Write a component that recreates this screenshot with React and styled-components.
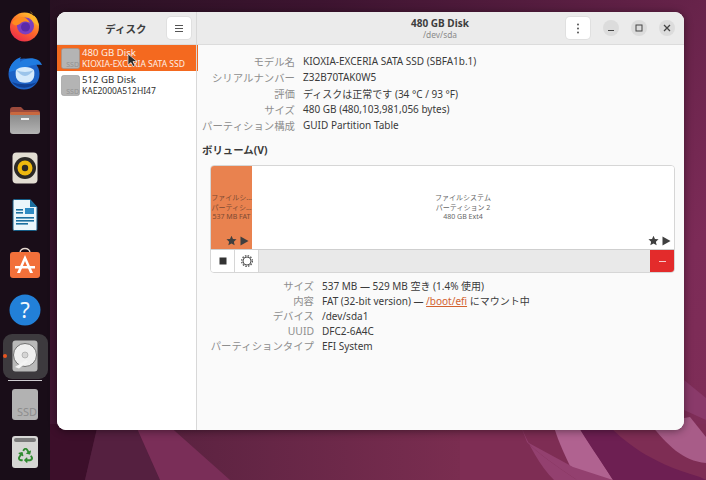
import React from 'react'
import styled, { createGlobalStyle } from 'styled-components'
import { FaRecycle } from 'react-icons/fa'

const GlobalStyle = createGlobalStyle`
  html, body { margin: 0; padding: 0; width: 706px; height: 480px; overflow: hidden; }
  body { font-family: "Noto Sans", "Noto Sans CJK JP", sans-serif; }
`

const Desktop = styled.div`
  position: relative;
  width: 706px;
  height: 480px;
  display: flex;
  overflow: hidden;
  background: linear-gradient(128deg, #24101f 0%, #3d1430 30%, #5f2045 58%, #7c2b57 82%, #7f2e57 100%);
`

const Wallpaper = styled.svg`
  position: absolute;
  inset: 0;
`

const Dock = styled.nav`
  position: relative;
  width: 50px;
  height: 480px;
  box-sizing: border-box;
  padding-top: 2px;
  background: #190d18;
  display: flex;
  flex-direction: column;
  align-items: center;
  flex-shrink: 0;
`

const DockSlot = styled.div`
  position: relative;
  width: 45px;
  height: ${p => p.$h || 47.4}px;
  display: flex;
  align-items: center;
  justify-content: center;
  flex-shrink: 0;
  border-radius: 9px;
  background: ${p => (p.$active ? '#3d3a3e' : 'transparent')};
`

const RunDot = styled.span`
  position: absolute;
  left: 0;
  top: 50%;
  width: 4px;
  height: 4px;
  margin-top: -2px;
  border-radius: 50%;
  background: #e95420;
`

const DockRule = styled.div`
  width: 34px;
  height: 1px;
  margin-top: 1px;
  background: #cfcdd0;
  flex-shrink: 0;
`

const SsdTile = styled.div`
  width: 26px;
  height: 31px;
  box-sizing: border-box;
  padding: 0 1px 3px 0;
  border-radius: 3px;
  background: #b2b2b2;
  display: flex;
  align-items: flex-end;
  justify-content: flex-end;
  color: #8d8d8d;
  font-size: 11px;
  line-height: 11px;
`

const TrashTile = styled.div`
  width: 26px;
  height: 32px;
  box-sizing: border-box;
  padding-top: 2px;
  border-radius: 3px;
  background: #d6d6d4;
  display: flex;
  flex-direction: column;
  align-items: center;
  gap: 6px;
  color: #2f8a2f;
`

const TrashLid = styled.div`
  width: 22px;
  height: 4px;
  border-radius: 2px;
  background: #7b7b7b;
`

const Stage = styled.div`
  position: relative;
  flex: 1;
  padding: 12px 22px 50px 7px;
`

const Win = styled.div`
  height: 418px;
  display: flex;
  border-radius: 9px;
  overflow: hidden;
  background: #fafafa;
  box-shadow: 0 1px 8px rgba(0, 0, 0, 0.45);
`

const SidePane = styled.aside`
  width: 139px;
  flex-shrink: 0;
  border-right: 1px solid #d8d8d8;
  background: #fff;
  display: flex;
  flex-direction: column;
`

const MainPane = styled.main`
  flex: 1;
  min-width: 0;
  display: flex;
  flex-direction: column;
`

const Header = styled.header`
  height: 32px;
  flex-shrink: 0;
  display: flex;
  align-items: center;
  background: #ebebeb;
  border-bottom: 1px solid #dcdcdc;
`

const SideTitle = styled.div`
  flex: 1;
  padding-left: 28px;
  text-align: center;
  font-size: 10.5px;
  font-weight: 700;
  color: #3d3d3d;
`

const HeadButton = styled.button`
  width: 24px;
  height: 22px;
  padding: 0;
  margin-right: ${p => p.$mr || 0}px;
  border: none;
  border-radius: 4px;
  background: #fff;
  box-shadow: 0 0 0 1px #e0e0e0;
  display: flex;
  align-items: center;
  justify-content: center;
  flex-shrink: 0;
`

const TitleBlock = styled.div`
  flex: 1;
  padding: 1px 0 0 117px;
  text-align: center;
  line-height: 11px;
`

const TitleMain = styled.div`
  font-size: 10px;
  font-weight: 700;
  color: #3d3d3d;
`

const TitleSub = styled.div`
  font-size: 8.4px;
  color: #8a8a8a;
`

const WinControls = styled.div`
  display: flex;
  gap: 12px;
  margin: 0 9px 0 13px;
`

const WinControl = styled.span`
  width: 16px;
  height: 16px;
  border-radius: 50%;
  background: #dcdcdc;
  display: flex;
  align-items: center;
  justify-content: center;
`

const DiskRow = styled.div`
  height: 26px;
  margin-top: ${p => p.$mt || 0}px;
  padding-left: 4px;
  display: flex;
  align-items: center;
  gap: 2px;
  background: ${p => (p.$selected ? '#f4691f' : 'transparent')};
  color: ${p => (p.$selected ? '#fdeee4' : '#2f2f2f')};
  line-height: 11px;
  position: relative;
`

const DiskName = styled.div`
  font-size: 9.6px;
`

const DiskModel = styled.div`
  font-size: 8.5px;
  white-space: nowrap;
`

const Cursor = styled.svg`
  position: absolute;
  left: 70px;
  top: 8px;
`

const Body = styled.div`
  flex: 1;
  background: #fafafa;
  padding: 8px 9px 0 5px;
  position: relative;
`

const SelectedEdge = styled.div`
  position: absolute;
  left: 0;
  top: 0;
  width: 1px;
  height: 26px;
  background: #f4691f;
`

const InfoGrid = styled.dl`
  margin: 0;
  display: grid;
  grid-template-columns: ${p => p.$label}px 1fr;
  column-gap: 8px;
  grid-auto-rows: ${p => p.$row || 16}px;
  align-items: center;
  font-size: 10px;
`

const InfoKey = styled.dt`
  text-align: right;
  font-size: 10.4px;
  color: #8e8e8e;
  white-space: nowrap;
`

const InfoValue = styled.dd`
  margin: 0;
  color: #3a3a3a;
  white-space: nowrap;
`

const MountLink = styled.span`
  color: #d2622f;
  text-decoration: underline;
`

const VolumeHeading = styled.h3`
  margin: 10px 0 8px;
  font-size: 10.4px;
  line-height: 14px;
  font-weight: 700;
  color: #3a3a3a;
`

const VolumeBox = styled.div`
  margin-left: 8px;
  height: 108px;
  border: 1px solid #d6d6d6;
  border-radius: 4px;
  box-sizing: border-box;
  display: flex;
  flex-direction: column;
  overflow: hidden;
  background: #fff;
`

const VolumeMap = styled.div`
  height: 83px;
  display: flex;
  flex-shrink: 0;
  border-bottom: 1px solid #cfcfcf;
`

const Partition = styled.div`
  position: relative;
  flex: ${p => (p.$grow ? 1 : '0 0 41px')};
  overflow: hidden;
  background: ${p => (p.$selected ? '#e9824f' : '#fff')};
  color: ${p => (p.$selected ? '#7c4a33' : '#666')};
  display: flex;
  flex-direction: column;
  align-items: center;
  padding-top: 27px;
  font-size: 7px;
  line-height: 9.5px;
  box-sizing: border-box;
  white-space: nowrap;
`

const PartitionMarks = styled.div`
  position: absolute;
  right: 3px;
  bottom: 3px;
  display: flex;
  gap: 3px;
  align-items: center;
`

const VolumeBar = styled.div`
  flex: 1;
  display: flex;
  background: #e9e9e9;
`

const BarButton = styled.div`
  width: 23px;
  background: #fff;
  border-right: 1px solid #d6d6d6;
  display: flex;
  align-items: center;
  justify-content: center;
`

const DeleteButton = styled.div`
  width: 24px;
  margin-left: auto;
  background: #e32b2b;
  display: flex;
  align-items: center;
  justify-content: center;
`

const DetailWrap = styled.div`
  margin-top: 5px;
`

const MarkIcons = () => (
  <>
    <svg width="11" height="11" viewBox="0 0 24 24" fill="#3f3f3f">
      <path d="M12 1.500l3.200 7.100 7.800.8-5.800 5.200 1.700 7.700L12 18.400l-6.900 3.900 1.700-7.700L1 9.400l7.800-.8z" />
    </svg>
    <svg width="9" height="10" viewBox="0 0 18 20" fill="#3f3f3f">
      <path d="M1 1l16 9-16 9z" />
    </svg>
  </>
)

const SsdIcon = () => (
  <svg width="19" height="21" viewBox="0 0 19 21">
    <rect x="0.500" y="0.500" width="18" height="20" rx="2" fill="#b4b4b4" stroke="#969696" strokeWidth="0.600" />
    <text x="18" y="19" textAnchor="end" fontSize="7" fill="#939393" fontFamily="Noto Sans, sans-serif">SSD</text>
  </svg>
)

const Firefox = () => (
  <svg width="32" height="32" viewBox="0 0 32 32">
    <defs>
      <linearGradient id="ff" x1="0.8" y1="0" x2="0.2" y2="1">
        <stop offset="0" stopColor="#ffcb2e" />
        <stop offset="0.5" stopColor="#ff6a2b" />
        <stop offset="1" stopColor="#e8264e" />
      </linearGradient>
    </defs>
    <circle cx="15.500" cy="17" r="14.500" fill="url(#ff)" />
    <path d="M21 1c2 4 8 6 9 14 0-3-2-6-5-8 0-2-2-4-4-6z" fill="#ffc52c" />
    <path d="M22 4c4 3 7 7 8 12l-8-5z" fill="#ffb52a" />
    <circle cx="16.500" cy="16" r="8.500" fill="#7b3fc0" />
    <circle cx="16.500" cy="17" r="4.500" fill="#5b2aa8" />
    <path d="M3 13c3 4 7 2 9 0s6-2 9 0c-3-6-8-7-12-5s-5 3-6 5z" fill="#ff8a1f" />
  </svg>
)

const Thunderbird = () => (
  <svg width="36" height="36" viewBox="0 0 36 36">
    <circle cx="17" cy="19" r="15.500" fill="#1c62c6" />
    <path d="M2 17C3 9 8 4 14 2c-1 2-1 3-1 5 5-4 12-5 18-2 2 1 3 3 4 5-6-1-12 0-17 3z" fill="#1f7be0" />
    <path d="M9 15c2-2 5-3 9-3s7 1 9 3c1 5 0 10-4 12-3 1-7 1-10 0-4-2-5-7-4-12z" fill="#d6eafb" />
    <path d="M9 15c3 3 6 6 9 6s6-3 9-6c-3 1-6 2-9 2s-6-1-9-2z" fill="#9cc4ea" />
    <path d="M5 27c5 7 18 8 25 0-6 3-18 3-25 0z" fill="#0f3f93" />
  </svg>
)

const FilesIcon = () => (
  <svg width="32" height="30" viewBox="0 0 32 30">
    <defs>
      <linearGradient id="folder" x1="0" y1="0" x2="0" y2="1">
        <stop offset="0" stopColor="#858585" />
        <stop offset="1" stopColor="#b4b4b4" />
      </linearGradient>
    </defs>
    <path d="M1 5c0-2 1-3 3-3h8l3 3h13c2 0 3 1 3 3v4H1z" fill="#9c4a3c" />
    <rect x="1" y="7" width="30" height="22" rx="3" fill="url(#folder)" />
    <rect x="1" y="7" width="30" height="3" rx="1.500" fill="#c9683f" />
    <rect x="12" y="13" width="8" height="2" fill="#efefef" />
  </svg>
)

const Rhythmbox = () => (
  <svg width="26" height="32" viewBox="0 0 26 32">
    <rect x="0.500" y="0.500" width="25" height="31" rx="4" fill="#e2ddd2" />
    <circle cx="13" cy="16" r="11" fill="#2b2926" />
    <circle cx="13" cy="16" r="7.500" fill="#eeb90e" />
    <circle cx="13" cy="16" r="3.200" fill="#2b2926" />
  </svg>
)

const WriterIcon = () => (
  <svg width="26" height="32" viewBox="0 0 26 32">
    <path d="M1 2c0-1 .5-1.500 1.500-1.500H18L25 8v22c0 1-.5 1.500-1.500 1.500h-21C1.500 31.500 1 31 1 30z" fill="#eaf6fb" stroke="#155d86" strokeWidth="1" />
    <path d="M18 .5V8h7z" fill="#1a6f9f" />
    <rect x="4" y="10" width="7" height="1.600" fill="#1a6f9f" />
    <rect x="4" y="13" width="7" height="1.600" fill="#1a6f9f" />
    <rect x="13" y="9" width="9" height="6" fill="#2e8cc4" />
    <rect x="4" y="18" width="18" height="1.600" fill="#1a6f9f" />
    <rect x="4" y="21" width="18" height="1.600" fill="#1a6f9f" />
    <rect x="4" y="24" width="12" height="1.600" fill="#1a6f9f" />
  </svg>
)

const StoreIcon = () => (
  <svg width="32" height="32" viewBox="0 0 32 32">
    <path d="M11 6c0-6 10-6 10 0" fill="none" stroke="#e6d9d0" strokeWidth="1.500" />
    <rect x="1" y="5" width="30" height="26" rx="3" fill="#f2703a" />
    <path d="M16 8l8 18h-3l-5-12-5 12H8z" fill="#fff" />
    <rect x="6" y="19" width="20" height="2.500" fill="#fff" />
  </svg>
)

const HelpIcon = () => (
  <svg width="32" height="32" viewBox="0 0 32 32">
    <circle cx="16" cy="16" r="15.500" fill="#2280d8" />
    <text x="16" y="24" textAnchor="middle" fontSize="22" fill="#f2f7fc" fontFamily="Noto Sans, sans-serif">?</text>
  </svg>
)

const DisksIcon = () => (
  <svg width="26" height="32" viewBox="0 0 26 32">
    <rect x="0.500" y="0.500" width="25" height="31" rx="3" fill="#b9b9b9" />
    <circle cx="13" cy="15" r="11.500" fill="#efefef" stroke="#555" strokeWidth="0.800" />
    <circle cx="13" cy="15" r="3" fill="#d5d5d5" stroke="#9a9a9a" strokeWidth="0.600" />
    <path d="M3 27l11-7 2 1.500-9 7z" fill="#f4f4f4" />
  </svg>
)

const rows = [
  ['モデル名', 'KIOXIA-EXCERIA SATA SSD (SBFA1b.1)'],
  ['シリアルナンバー', 'Z32B70TAK0W5'],
  ['評価', 'ディスクは正常です (34 °C / 93 °F)'],
  ['サイズ', '480 GB (480,103,981,056 bytes)'],
  ['パーティション構成', 'GUID Partition Table'],
]

const App = () => (
  <Desktop>
    <GlobalStyle />
    <Wallpaper width="706" height="480" viewBox="0 0 706 480">
      <defs>
        <linearGradient id="floor" x1="0" y1="0" x2="1" y2="0">
          <stop offset="0" stopColor="#5a2240" />
          <stop offset="1" stopColor="#7a2d50" />
        </linearGradient>
      </defs>
      <rect x="160" y="424" width="300" height="56" fill="url(#floor)" />
      <path d="M50 424h48l-13 56H50z" fill="#3c0f2a" />
      <path d="M98 424h37l25 56H85z" fill="#552040" />
      <path d="M135 424h32l63 56h-70z" fill="#7a2e58" />
      <rect x="460" y="424" width="246" height="56" fill="#7e2d54" />
      <path d="M520 424l7 18c12 12 26 22 50 38h-23c-14-14-26-36-34-56z" fill="#93406f" />
      <path d="M553 424l24 0 36 56h-36c-10-20-18-36-24-56z" fill="#b06290" />
      <path d="M527 442c12 12 26 22 50 38h36l-40-13z" fill="#93406f" />
      <path d="M577 424h30c16 16 40 38 93 53l6 3h-93c-14-22-26-38-36-56z" fill="#6d1f52" />
      <path d="M650 424l40-7 16 20v26c-24-2-38-18-56-39z" fill="#a85c88" />
      <path d="M684 380l22 18v22l-22-10z" fill="#8a3a6a" />
    </Wallpaper>
    <Dock>
      <DockSlot><Firefox /></DockSlot>
      <DockSlot><Thunderbird /></DockSlot>
      <DockSlot><FilesIcon /></DockSlot>
      <DockSlot><Rhythmbox /></DockSlot>
      <DockSlot><WriterIcon /></DockSlot>
      <DockSlot><StoreIcon /></DockSlot>
      <DockSlot><HelpIcon /></DockSlot>
      <DockSlot $active $h={45}><RunDot /><DisksIcon /></DockSlot>
      <DockRule />
      <DockSlot><SsdTile>SSD</SsdTile></DockSlot>
      <DockSlot><TrashTile><TrashLid /><FaRecycle size={15} /></TrashTile></DockSlot>
    </Dock>
    <Stage>
      <Win>
        <SidePane>
          <Header>
            <SideTitle>ディスク</SideTitle>
            <HeadButton $mr={5}>
              <svg width="10" height="9" viewBox="0 0 10 9" stroke="#555" strokeWidth="1"><path d="M1 1.500h8M1 4.500h8M1 7.500h8" /></svg>
            </HeadButton>
          </Header>
          <DiskRow $selected>
            <SsdIcon />
            <div>
              <DiskName>480 GB Disk</DiskName>
              <DiskModel>KIOXIA-EXCERIA SATA SSD</DiskModel>
            </div>
            <Cursor width="11" height="14" viewBox="0 0 11 14">
              <path d="M1 1v11l3-2.500 2 4 2-1-2-4h4z" fill="#2b2b2b" stroke="#fff" strokeWidth="0.600" />
            </Cursor>
          </DiskRow>
          <DiskRow $mt={1}>
            <SsdIcon />
            <div>
              <DiskName>512 GB Disk</DiskName>
              <DiskModel>KAE2000A512HI47</DiskModel>
            </div>
          </DiskRow>
        </SidePane>
        <MainPane>
          <Header>
            <TitleBlock>
              <TitleMain>480 GB Disk</TitleMain>
              <TitleSub>/dev/sda</TitleSub>
            </TitleBlock>
            <HeadButton>
              <svg width="4" height="11" viewBox="0 0 4 11" fill="#444"><circle cx="2" cy="1.500" r="0.900" /><circle cx="2" cy="5.500" r="0.900" /><circle cx="2" cy="9.500" r="0.900" /></svg>
            </HeadButton>
            <WinControls>
              <WinControl>
                <svg width="8" height="8" viewBox="0 0 8 8" stroke="#444" strokeWidth="1.200"><path d="M1 6.500h6" /></svg>
              </WinControl>
              <WinControl>
                <svg width="8" height="8" viewBox="0 0 8 8" stroke="#444" strokeWidth="1" fill="none"><rect x="1" y="1" width="6" height="6" /></svg>
              </WinControl>
              <WinControl>
                <svg width="8" height="8" viewBox="0 0 8 8" stroke="#444" strokeWidth="1.300"><path d="M1 1l6 6M7 1l-6 6" /></svg>
              </WinControl>
            </WinControls>
          </Header>
          <Body>
            <SelectedEdge />
            <InfoGrid $label={93}>
              {rows.map(([k, v]) => (
                <React.Fragment key={k}>
                  <InfoKey>{k}</InfoKey>
                  <InfoValue>{v}</InfoValue>
                </React.Fragment>
              ))}
            </InfoGrid>
            <VolumeHeading>ボリューム(V)</VolumeHeading>
            <VolumeBox>
              <VolumeMap>
                <Partition $selected>
                  <span>ファイルシ…</span>
                  <span>パーティシ…</span>
                  <span>537 MB FAT</span>
                  <PartitionMarks><MarkIcons /></PartitionMarks>
                </Partition>
                <Partition $grow>
                  <span>ファイルシステム</span>
                  <span>パーティション 2</span>
                  <span>480 GB Ext4</span>
                  <PartitionMarks><MarkIcons /></PartitionMarks>
                </Partition>
              </VolumeMap>
              <VolumeBar>
                <BarButton>
                  <svg width="8" height="8" viewBox="0 0 8 8"><rect width="7" height="7" x="0.500" y="0.500" fill="#333" /></svg>
                </BarButton>
                <BarButton>
                  <svg width="14" height="14" viewBox="0 0 14 14" fill="none" stroke="#555">
                    <circle cx="7" cy="7" r="4" strokeWidth="1" />
                    <circle cx="7" cy="7" r="5.300" strokeWidth="1.400" strokeDasharray="1.500 1.275" />
                  </svg>
                </BarButton>
                <DeleteButton>
                  <svg width="9" height="3" viewBox="0 0 9 3" stroke="#f6c9c9" strokeWidth="1"><path d="M1 1.500h7" /></svg>
                </DeleteButton>
              </VolumeBar>
            </VolumeBox>
            <DetailWrap>
              <InfoGrid $label={112} $row={15}>
                <InfoKey>サイズ</InfoKey>
                <InfoValue>537 MB — 529 MB 空き (1.4% 使用)</InfoValue>
                <InfoKey>内容</InfoKey>
                <InfoValue>FAT (32-bit version) — <MountLink>/boot/efi</MountLink> にマウント中</InfoValue>
                <InfoKey>デバイス</InfoKey>
                <InfoValue>/dev/sda1</InfoValue>
                <InfoKey>UUID</InfoKey>
                <InfoValue>DFC2-6A4C</InfoValue>
                <InfoKey>パーティションタイプ</InfoKey>
                <InfoValue>EFI System</InfoValue>
              </InfoGrid>
            </DetailWrap>
          </Body>
        </MainPane>
      </Win>
    </Stage>
  </Desktop>
)

export default App
